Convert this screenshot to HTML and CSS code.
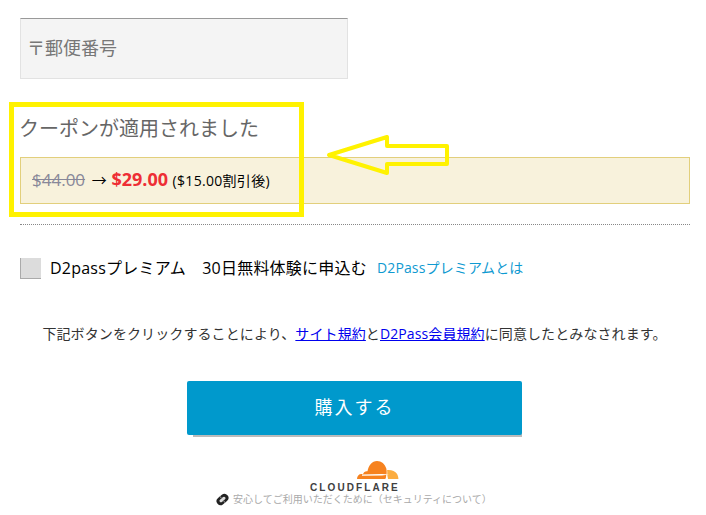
FILE: index.html
```html
<!DOCTYPE html>
<html lang="ja">
<head>
    <meta charset="UTF-8">
    <meta name="viewport" content="width=device-width, initial-scale=1.0">
    <title>購入する</title>
    <link rel="stylesheet" href="styles.css">
</head>
<body>
    <div class="page">
        <div class="zip-input">〒郵便番号</div>

        <div class="coupon-title">クーポンが適用されました</div>
        <div class="coupon-box">
            <s class="price-old">$44.00</s>
            <span class="price-arrow">→</span>
            <b class="price-new">$29.00</b>
            <span class="price-note">($15.00割引後)</span>
        </div>

        <div class="divider"></div>

        <div class="premium-row">
            <span class="checkbox"></span>
            <span class="premium-label">D2passプレミアム　30日無料体験に申込む</span>
            <a class="premium-link" href="#">D2Passプレミアムとは</a>
        </div>

        <div class="terms">
            下記ボタンをクリックすることにより、<a href="#">サイト規約</a>と<a href="#">D2Pass会員規約</a>に同意したとみなされます。
        </div>

        <div class="buy-wrap">
            <button class="buy-button">購入する</button>
        </div>

        <div class="cf-logo">
            <svg class="cf-cloud" width="44" height="20" viewBox="0 0 44 20">
                <path fill="#f6821f" d="M2 19c0-3 1.800-5 4.500-5 .6 0 1.100 .1 1.500 .3 .6-2.200 2.500-3.500 4.500-3.100 1-5.500 4.500-10.200 9.500-10.200 4.500 0 8 3 9.300 7.500 .8 3 .4 7-.6 10.500z"/>
                <path fill="#fbad41" d="M31.500 19c.7-3 1-6 .6-9 4.400-.4 8 1 10 4 .8 1.400 1.300 3.300 1.300 5z"/>
                <path fill="#fff" d="M7 15.700l20-.3 7-.9-7-.5-20 .5zM30.500 19l1.500-5.500 1 5.500z"/>
            </svg>
            <div class="cf-name">CLOUDFLARE</div>
        </div>
        <div class="security">
            <svg class="security-icon" width="13" height="13" viewBox="0 0 13 13">
                <g transform="rotate(-40 6.500 6.500)">
                    <rect x="0" y="2.500" width="13" height="8" rx="4" fill="#222"/>
                    <rect x="3" y="5" width="7" height="3" rx="1.500" fill="#ddd"/>
                    <path d="M6.500 2.500v3M6.500 7.500v3" stroke="#888" stroke-width="1"/>
                </g>
            </svg>
            <span>安心してご利用いただくために（セキュリティについて）</span>
        </div>
    </div>

    <!-- screenshot markup on top of the page -->
    <div class="mark-box"></div>
    <svg class="mark-arrow" width="130" height="50" viewBox="0 0 130 50">
        <path d="M7 25 L65 7 L65 16 L125 16 L125 34 L65 34 L65 43 Z" fill="none" stroke="#fff200" stroke-width="4" stroke-linejoin="round"/>
    </svg>
</body>
</html>
```

FILE: styles.css
```css
html, body {
    height: 100%;
}

body {
    margin: 0;
    background: #fff;
    font-family: "Open Sans", "Noto Sans CJK JP", sans-serif;
    color: #000;
    overflow: hidden;
    position: relative;
}

.page {
    padding: 18px 16px 0 20px;
}

.zip-input {
    width: 328px;
    height: 61px;
    box-sizing: border-box;
    border: 1px solid #e2e2e2;
    border-top: 1px solid #999;
    background: #f4f4f4;
    color: #777;
    font-size: 18px;
    line-height: 58px;
    padding-left: 6px;
}

.coupon-title {
    margin: 38px 0 0 -1px;
    font-size: 20px;
    line-height: 24px;
    color: #666;
}

.coupon-box {
    margin-top: 16px;
    height: 47px;
    box-sizing: border-box;
    border: 1px solid #e2cf7c;
    background: #f8f2dc;
    padding-left: 11px;
    line-height: 43px;
    font-size: 14px;
    white-space: nowrap;
}

.price-old {
    font-size: 17px;
    color: #889;
}

.price-arrow {
    margin-left: 3px;
    font-size: 15px;
}

.price-new {
    margin-left: 1px;
    font-size: 18px;
    color: #ee2e35;
}

.price-note {
    margin-left: 1px;
    font-size: 14px;
    letter-spacing: 0.3px;
}

.divider {
    margin-top: 20px;
    border-top: 1px dotted #888;
}

.premium-row {
    display: flex;
    align-items: center;
    margin-top: 33px;
    height: 21px;
}

.checkbox {
    width: 21px;
    height: 21px;
    box-sizing: border-box;
    background: #dcdcdc;
    border-left: 1px solid #aaa;
    border-bottom: 1px solid #aaa;
}

.premium-label {
    margin: 0 0 2px 9px;
    font-size: 16px;
    line-height: 18px;
    letter-spacing: 0.22px;
}

.premium-link {
    margin: 0 0 2px 10px;
    font-size: 14px;
    line-height: 18px;
    letter-spacing: 0.14px;
    color: #0f9ad1;
    text-decoration: none;
}

.terms {
    margin: 45px 1px 0 0;
    font-size: 14px;
    line-height: 20px;
    letter-spacing: 0.1px;
    text-align: center;
    color: #333;
}

.terms a {
    color: #00e;
}

.buy-wrap {
    margin-top: 37px;
    padding-left: 167px;
}

.buy-button {
    display: block;
    width: 335px;
    height: 54px;
    border: 0;
    border-radius: 2px;
    background: #0099cc;
    box-shadow: 3px 5px 0 -3px #bbb;
    color: #fff;
    font-family: inherit;
    font-size: 18px;
    letter-spacing: 2px;
    padding: 0 0 4px;
}

.cf-logo {
    margin-top: 25px;
    margin-left: 290px;
    width: 90px;
}

.cf-cloud {
    display: block;
    margin-left: 45px;
}

.cf-name {
    margin-top: 3px;
    font-family: "Liberation Sans", sans-serif;
    font-size: 10px;
    font-weight: bold;
    line-height: 9px;
    letter-spacing: 2.1px;
    color: #404041;
    white-space: nowrap;
}

.security {
    display: flex;
    align-items: center;
    margin-left: 196px;
    font-size: 10px;
    line-height: 14px;
    color: #aaa;
    white-space: nowrap;
}

.security-icon {
    margin-right: 4px;
}

.mark-box {
    position: absolute;
    left: 9px;
    top: 102px;
    width: 295px;
    height: 115px;
    box-sizing: border-box;
    border: 5px solid #fff200;
}

.mark-arrow {
    position: absolute;
    left: 322px;
    top: 130px;
}
```
